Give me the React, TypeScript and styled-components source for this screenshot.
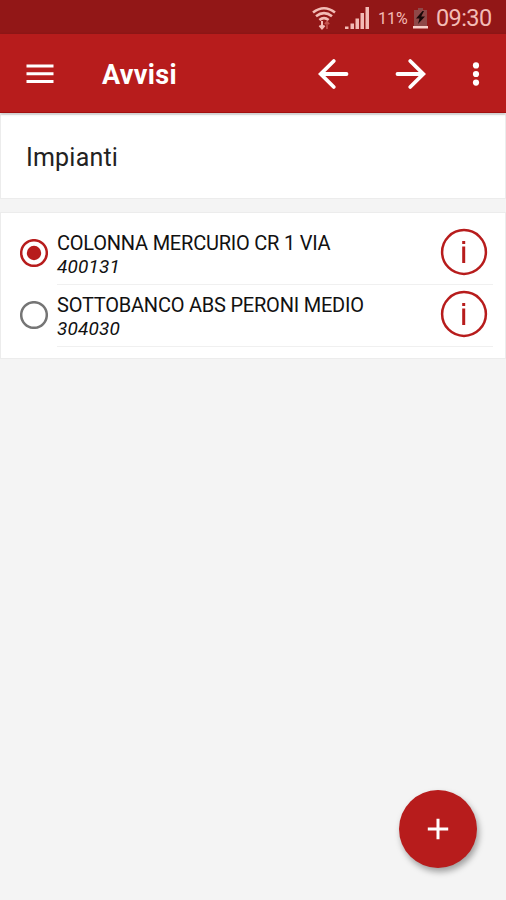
import React, { useState } from 'react';
import styled, { createGlobalStyle } from 'styled-components';

const RED = '#b71c1c';

const GlobalStyle = createGlobalStyle`
  * { box-sizing: border-box; }
  body { margin: 0; background: #f4f4f4; font-family: Roboto, "Liberation Sans", sans-serif; }
  button { border: 0; padding: 0; background: none; font: inherit; color: inherit; cursor: pointer; }
  svg { display: block; }
`;

const Screen = styled.div`
  position: relative;
  display: flex;
  flex-direction: column;
  height: 100vh;
  min-height: 900px;
  background: #f4f4f4;
`;

const StatusBar = styled.div`
  display: flex;
  align-items: center;
  justify-content: flex-end;
  height: 34px;
  padding: 2px 14px 0 0;
  background: #921717;
  color: #f3bcb6;
`;

const BatteryLevel = styled.span`
  width: 31px;
  margin: 0 4px 0 8px;
  font-size: 16px;
  white-space: nowrap;
`;

const Clock = styled.span`
  width: 56px;
  margin-left: 8px;
  font-size: 23.5px;
  letter-spacing: -0.6px;
  white-space: nowrap;
`;

const AppBar = styled.header`
  display: flex;
  align-items: center;
  height: 79px;
  padding: 1px 26px 0 25px;
  border-bottom: 1px solid #a30f0f;
  background: ${RED};
  color: #fff;
  box-shadow: 0 1px 3px rgba(0, 0, 0, 0.22);
  z-index: 1;
`;

const Title = styled.h1`
  flex: 1;
  margin: 3px 0 0 47px;
  font-size: 27px;
  font-weight: 700;
  line-height: 32px;
  letter-spacing: 0.35px;
`;

const BarButton = styled.button<{ $gap?: number }>`
  margin-left: ${({ $gap = 0 }) => $gap}px;
`;

const Card = styled.section<{ $top: number }>`
  margin: ${({ $top }) => $top}px 0 0;
  border: 1px solid #ececec;
  background: #fff;
`;

const Heading = styled.h2`
  margin: 0;
  padding: 27px 25px 24px;
  font-size: 25px;
  font-weight: 400;
  line-height: 32px;
  color: #222;
  letter-spacing: 0.2px;
`;

const List = styled.div`
  padding: 10px 12px 11px 19px;
`;

const Row = styled.div`
  display: flex;
  height: 62px;
`;

const RadioButton = styled.button`
  width: 28px;
  height: 60px;
  margin-right: 9px;
`;

const RowBody = styled.div`
  display: flex;
  flex: 1;
  justify-content: space-between;
  border-bottom: 1px solid #f0f0f0;
`;

const RowText = styled.div`
  padding-top: 9px;
  font-size: 20px;
  line-height: 23px;
  color: #111;
`;

const Name = styled.div`
  letter-spacing: -0.22px;
  white-space: nowrap;
`;

const Code = styled.div`
  font-size: 19px;
  font-style: italic;
  letter-spacing: 0.15px;
`;

const InfoButton = styled.button`
  align-self: flex-start;
  margin: 5px 5px 0 0;
`;

const Fab = styled.button`
  position: absolute;
  right: 29px;
  bottom: 32px;
  display: grid;
  place-items: center;
  width: 78px;
  height: 78px;
  border-radius: 50%;
  background: ${RED};
  box-shadow: 2px 4px 6px rgba(0, 0, 0, 0.35);
`;

const WifiSlot = styled.span`
  margin-right: 8px;
`;

const WifiIcon = () => (
  <svg width="26" height="26" viewBox="0 0 26 26" fill="none" stroke="currentColor" strokeWidth="2.6">
    <path d="M2 7.5Q13-1 24 7.5M5 11.3Q13 5 21 11.3M8.4 15Q13 11.2 17.6 15" />
    <path d="M11 16v7M8.5 20.5 11 23.5l2.5-3" strokeWidth="2" />
    <path d="M16 24v-7M13.8 19.2 16 16.5l2.2 2.7" stroke="#c45550" strokeWidth="1.6" />
  </svg>
);

const SignalIcon = () => (
  <svg width="25" height="22" viewBox="0 0 25 22" fill="currentColor">
    <path d="M0 19.5h3.5V22H0zM5.5 16.5H9V22H5.5zM10.5 11.5H14V22h-3.5zM15.5 6H19v16h-3.5zM20.5 0H24v22h-3.5z" />
  </svg>
);

const BatteryIcon = () => (
  <svg width="15" height="21" viewBox="0 0 15 21">
    <path d="M5 0h5v2h4v16H1V2h4z" fill="#8f4848" />
    <path d="M0 18h15v2.5H0z" fill="#f8cfca" />
    <path d="M9.5 3 3 10.5h3.5L5 16l7-7.5H8.2L11 3z" fill="#180707" />
  </svg>
);

const MenuIcon = () => (
  <svg width="30" height="24" viewBox="0 0 30 24" stroke="#fff" strokeWidth="3">
    <path d="M1.5 4h27M1.5 11.8h27M1.5 19.6h27" />
  </svg>
);

const BackIcon = () => (
  <svg width="32" height="32" viewBox="0 0 32 32" fill="none" stroke="#fff" strokeWidth="3.8" strokeLinecap="round">
    <path d="M29.5 16H4M16.8 3 3.7 16l13.1 13" />
  </svg>
);

const ForwardIcon = () => (
  <svg width="32" height="32" viewBox="0 0 32 32" fill="none" stroke="#fff" strokeWidth="3.8" strokeLinecap="round">
    <path d="M2.5 16h25.5M15.2 3 28.3 16 15.2 29" />
  </svg>
);

const MoreIcon = () => (
  <svg width="8" height="26" viewBox="0 0 8 26" fill="#fff">
    <circle cx="4" cy="4.4" r="3.1" />
    <circle cx="4" cy="13" r="3.1" />
    <circle cx="4" cy="21.6" r="3.1" />
  </svg>
);

const RadioIcon = ({ checked }: { checked: boolean }) => (
  <svg width="28" height="28" viewBox="0 0 28 28" fill="none">
    <circle cx="14" cy="14" r="12.8" stroke={checked ? RED : '#757575'} strokeWidth="2.5" />
    {checked && <circle cx="14" cy="14" r="7.2" fill={RED} />}
  </svg>
);

const InfoIcon = () => (
  <svg width="48" height="48" viewBox="0 0 48 48">
    <circle cx="24" cy="24" r="21.9" fill="none" stroke={RED} strokeWidth="2.5" />
    <path d="M22.2 18.5h3V35h-3zM22.2 13h3v3h-3z" fill={RED} />
  </svg>
);

const PlusIcon = () => (
  <svg width="22" height="22" viewBox="0 0 22 22" stroke="#fff" strokeWidth="3">
    <path d="M.8 11h20.4M11 .8v20.4" />
  </svg>
);

const plants = [
  { code: '400131', name: 'COLONNA MERCURIO CR 1 VIA' },
  { code: '304030', name: 'SOTTOBANCO ABS PERONI MEDIO' },
];

export default function App() {
  const [selected, setSelected] = useState('400131');
  return (
    <Screen>
      <GlobalStyle />
      <StatusBar>
        <WifiSlot><WifiIcon /></WifiSlot>
        <SignalIcon />
        <BatteryLevel>11%</BatteryLevel>
        <BatteryIcon />
        <Clock>09:30</Clock>
      </StatusBar>
      <AppBar>
        <BarButton aria-label="Menu"><MenuIcon /></BarButton>
        <Title>Avvisi</Title>
        <BarButton aria-label="Indietro"><BackIcon /></BarButton>
        <BarButton aria-label="Avanti" $gap={46}><ForwardIcon /></BarButton>
        <BarButton aria-label="Altro" $gap={45}><MoreIcon /></BarButton>
      </AppBar>
      <Card $top={1}><Heading>Impianti</Heading></Card>
      <Card $top={13}>
        <List>
          {plants.map((plant) => (
            <Row key={plant.code}>
              <RadioButton
                role="radio"
                aria-checked={selected === plant.code}
                aria-label={plant.name}
                onClick={() => setSelected(plant.code)}
              >
                <RadioIcon checked={selected === plant.code} />
              </RadioButton>
              <RowBody>
                <RowText>
                  <Name>{plant.name}</Name>
                  <Code>{plant.code}</Code>
                </RowText>
                <InfoButton aria-label="Informazioni"><InfoIcon /></InfoButton>
              </RowBody>
            </Row>
          ))}
        </List>
      </Card>
      <Fab aria-label="Aggiungi"><PlusIcon /></Fab>
    </Screen>
  );
}
